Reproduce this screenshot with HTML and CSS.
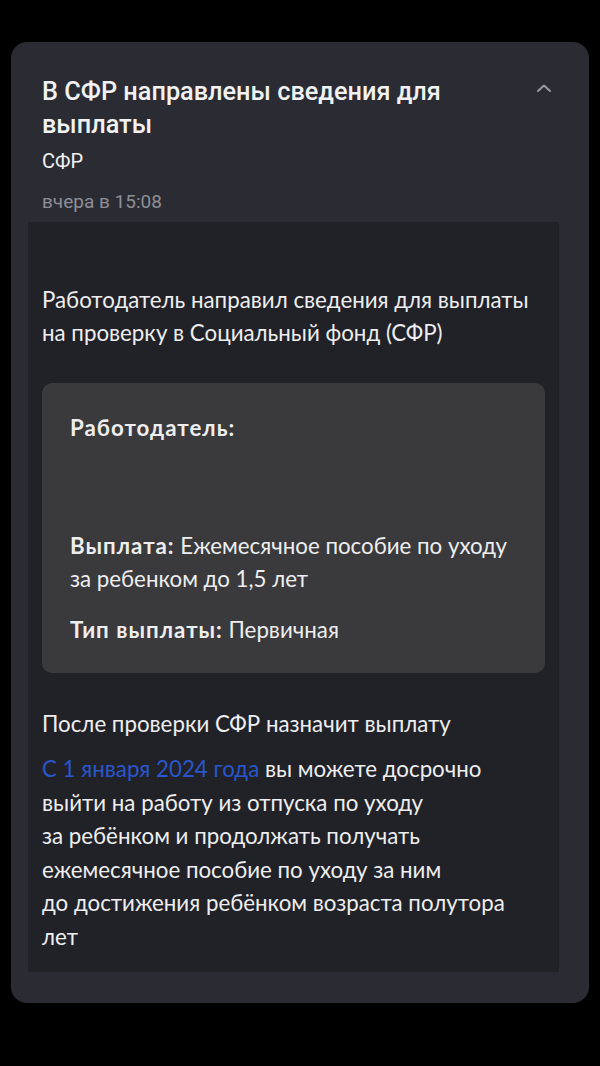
FILE: index.html
```html
<!DOCTYPE html>
<html lang="ru">
<head>
<meta charset="utf-8">
<link rel="stylesheet" href="styles.css">
</head>
<body>
<div class="screen">
  <div class="card">
    <div class="head">
      <div class="head-text">
        <h1 class="title">В СФР направлены сведения для выплаты</h1>
        <div class="sender">СФР</div>
        <div class="time">вчера в 15:08</div>
      </div>
      <svg class="chevron" width="16" height="10" viewBox="0 0 16 10"><path d="M2 8 L8 2.5 L14 8" fill="none" stroke="#9a9ba3" stroke-width="2" stroke-linecap="round" stroke-linejoin="round"/></svg>
    </div>
    <div class="body">
      <p class="intro">Работодатель направил сведения для выплаты<br>на проверку в Социальный фонд (СФР)</p>
      <div class="info">
        <p class="label-line"><b>Работодатель:</b></p>
        <div class="blank"></div>
        <p class="info-line"><b>Выплата:</b> Ежемесячное пособие по уходу<br>за ребенком до 1,5 лет</p>
        <p class="info-line"><b>Тип выплаты:</b> Первичная</p>
      </div>
      <p class="after">После проверки СФР назначит выплату</p>
      <p class="note"><span class="link">С 1 января 2024 года</span> вы можете досрочно<br>выйти на работу из отпуска по уходу<br>за ребёнком и продолжать получать<br>ежемесячное пособие по уходу за ним<br>до достижения ребёнком возраста полутора<br>лет</p>
    </div>
  </div>
</div>
</body>
</html>
```

FILE: styles.css
```css
html, body {
  margin: 0;
  padding: 0;
  background: #000;
}
.screen {
  width: 600px;
  height: 1066px;
  background: #000;
  padding: 42px 11px 0 11px;
  box-sizing: border-box;
}
.card {
  background: #2b2c33;
  border-radius: 16px;
  padding: 0 30px 31px 17px;
}
.head {
  display: flex;
  justify-content: space-between;
  align-items: flex-start;
  padding: 33px 0 0 14px;
}
.head-text {
  font-family: Roboto, "Noto Sans", sans-serif;
  color: #f2f2f4;
}
.title {
  margin: 0;
  font-size: 25.3px;
  font-weight: 500;
  line-height: 33px;
  width: 445px;
}
.sender {
  font-size: 20px;
  line-height: 24px;
  margin-top: 8px;
}
.time {
  font-size: 19px;
  line-height: 24px;
  color: #8d8e96;
  margin-top: 17px;
}
.chevron {
  margin-top: 8px;
  margin-right: 7px;
}
.body {
  background: #212228;
  margin-top: 8px;
  padding: 61px 14px 18px 14px;
  font-family: Lato, "Noto Sans", sans-serif;
  color: #eeeef0;
  font-size: 22.3px;
  line-height: 33px;
}
.body p {
  margin: 0;
}
.info {
  background: #3a3a3c;
  border-radius: 10px;
  margin-top: 34px;
  padding: 28px 28px 27px 28px;
}
.info b {
  font-weight: 700;
  letter-spacing: 1px;
}
.blank {
  height: 85px;
}
.info-line + .info-line {
  margin-top: 18px;
}
.after {
  margin-top: 34px !important;
}
.note {
  margin-top: 12px !important;
  line-height: 33.6px;
}
.link {
  color: #2a56cc;
}
```
